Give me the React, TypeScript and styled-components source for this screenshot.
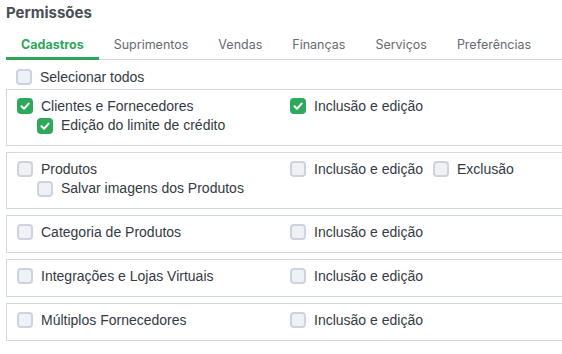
import React from "react";
import styled, { createGlobalStyle } from "styled-components";

const GlobalStyle = createGlobalStyle`
  body {
    margin: 0;
    background: #ffffff;
    overflow: hidden;
    font-family: "Liberation Sans", Arial, sans-serif;
  }
`;

type Perm = { label: string; checked?: boolean };

type Group = {
  main: Perm;
  sub?: Perm;
  extras: Perm[];
};

const tabs = ["Cadastros", "Suprimentos", "Vendas", "Finanças", "Serviços", "Preferências"];

const groups: Group[] = [
  {
    main: { label: "Clientes e Fornecedores", checked: true },
    sub: { label: "Edição do limite de crédito", checked: true },
    extras: [{ label: "Inclusão e edição", checked: true }],
  },
  {
    main: { label: "Produtos" },
    sub: { label: "Salvar imagens dos Produtos" },
    extras: [{ label: "Inclusão e edição" }, { label: "Exclusão" }],
  },
  {
    main: { label: "Categoria de Produtos" },
    extras: [{ label: "Inclusão e edição" }],
  },
  {
    main: { label: "Integrações e Lojas Virtuais" },
    extras: [{ label: "Inclusão e edição" }],
  },
  {
    main: { label: "Múltiplos Fornecedores" },
    extras: [{ label: "Inclusão e edição" }],
  },
];

const CheckBox: React.FC<{ checked?: boolean }> = ({ checked }) => (
  <Box $checked={!!checked}>
    {checked && (
      <svg width="16" height="16" viewBox="0 0 16 16">
        <polyline
          points="4.5,8.3 7,10.8 11.6,5.6"
          fill="none"
          stroke="#ffffff"
          strokeWidth="2"
          strokeLinecap="round"
          strokeLinejoin="round"
        />
      </svg>
    )}
  </Box>
);

const App: React.FC = () => {
  return (
    <>
      <GlobalStyle />
      <Page>
        <Title>Permissões</Title>
        <TabList>
          {tabs.map((t, i) => (
            <Tab key={t} $active={i === 0}>
              {t}
            </Tab>
          ))}
        </TabList>
        <SelectAll>
          <CheckBox />
          <span>Selecionar todos</span>
        </SelectAll>
        <PanelList>
          {groups.map((g) => (
            <Panel key={g.main.label}>
              <PanelRow>
                <Option>
                  <CheckBox checked={g.main.checked} />
                  <span>{g.main.label}</span>
                </Option>
                <Extras>
                  {g.extras.map((e) => (
                    <Option key={e.label}>
                      <CheckBox checked={e.checked} />
                      <span>{e.label}</span>
                    </Option>
                  ))}
                </Extras>
              </PanelRow>
              {g.sub && (
                <SubOption>
                  <CheckBox checked={g.sub.checked} />
                  <span>{g.sub.label}</span>
                </SubOption>
              )}
            </Panel>
          ))}
        </PanelList>
      </Page>
    </>
  );
};

const Page = styled.div`
  width: 640px;
  padding-left: 6px;
`;

const Title = styled.h1`
  margin: 0;
  height: 26px;
  line-height: 26px;
  font-family: Inter, "Liberation Sans", sans-serif;
  font-size: 15px;
  font-weight: 700;
  color: #4a4e57;
`;

const TabList = styled.div`
  display: flex;
  border-bottom: 1px solid #d2d8e2;
`;

const Tab = styled.div<{ $active?: boolean }>`
  padding: 11px 15px 4px;
  line-height: 16px;
  margin-bottom: -1px;
  font-family: Inter, "Liberation Sans", sans-serif;
  font-size: 12.5px;
  font-weight: ${(p) => (p.$active ? 700 : 400)};
  color: ${(p) => (p.$active ? "#2fa65a" : "#656a73")};
  border-bottom: 3px solid ${(p) => (p.$active ? "#2fa65a" : "transparent")};
`;

const Option = styled.label`
  display: flex;
  align-items: center;
  gap: 8px;
  height: 20px;
  line-height: 19px;
  font-size: 14px;
  color: #333a44;
  white-space: nowrap;
`;

const SelectAll = styled(Option)`
  margin-top: 7px;
  padding-left: 10px;
`;

const PanelList = styled.div`
  display: flex;
  flex-direction: column;
  gap: 6px;
  margin-top: 2px;
`;

const Panel = styled.div`
  border: 1px solid #d2d8e2;
  padding: 6px 0 10px 10px;
`;

const PanelRow = styled.div`
  display: grid;
  grid-template-columns: 273px auto;
`;

const Extras = styled.div`
  display: flex;
  gap: 10px;
`;

const SubOption = styled(Option)`
  height: 19px;
  padding-left: 20px;
`;

const Box = styled.span<{ $checked: boolean }>`
  flex: none;
  display: flex;
  box-sizing: border-box;
  width: 16px;
  height: 16px;
  border-radius: 4px;
  background: ${(p) => (p.$checked ? "#2ea85b" : "#eef1f6")};
  border: ${(p) => (p.$checked ? "none" : "2px solid #ccd3de")};
`;

export default App;
